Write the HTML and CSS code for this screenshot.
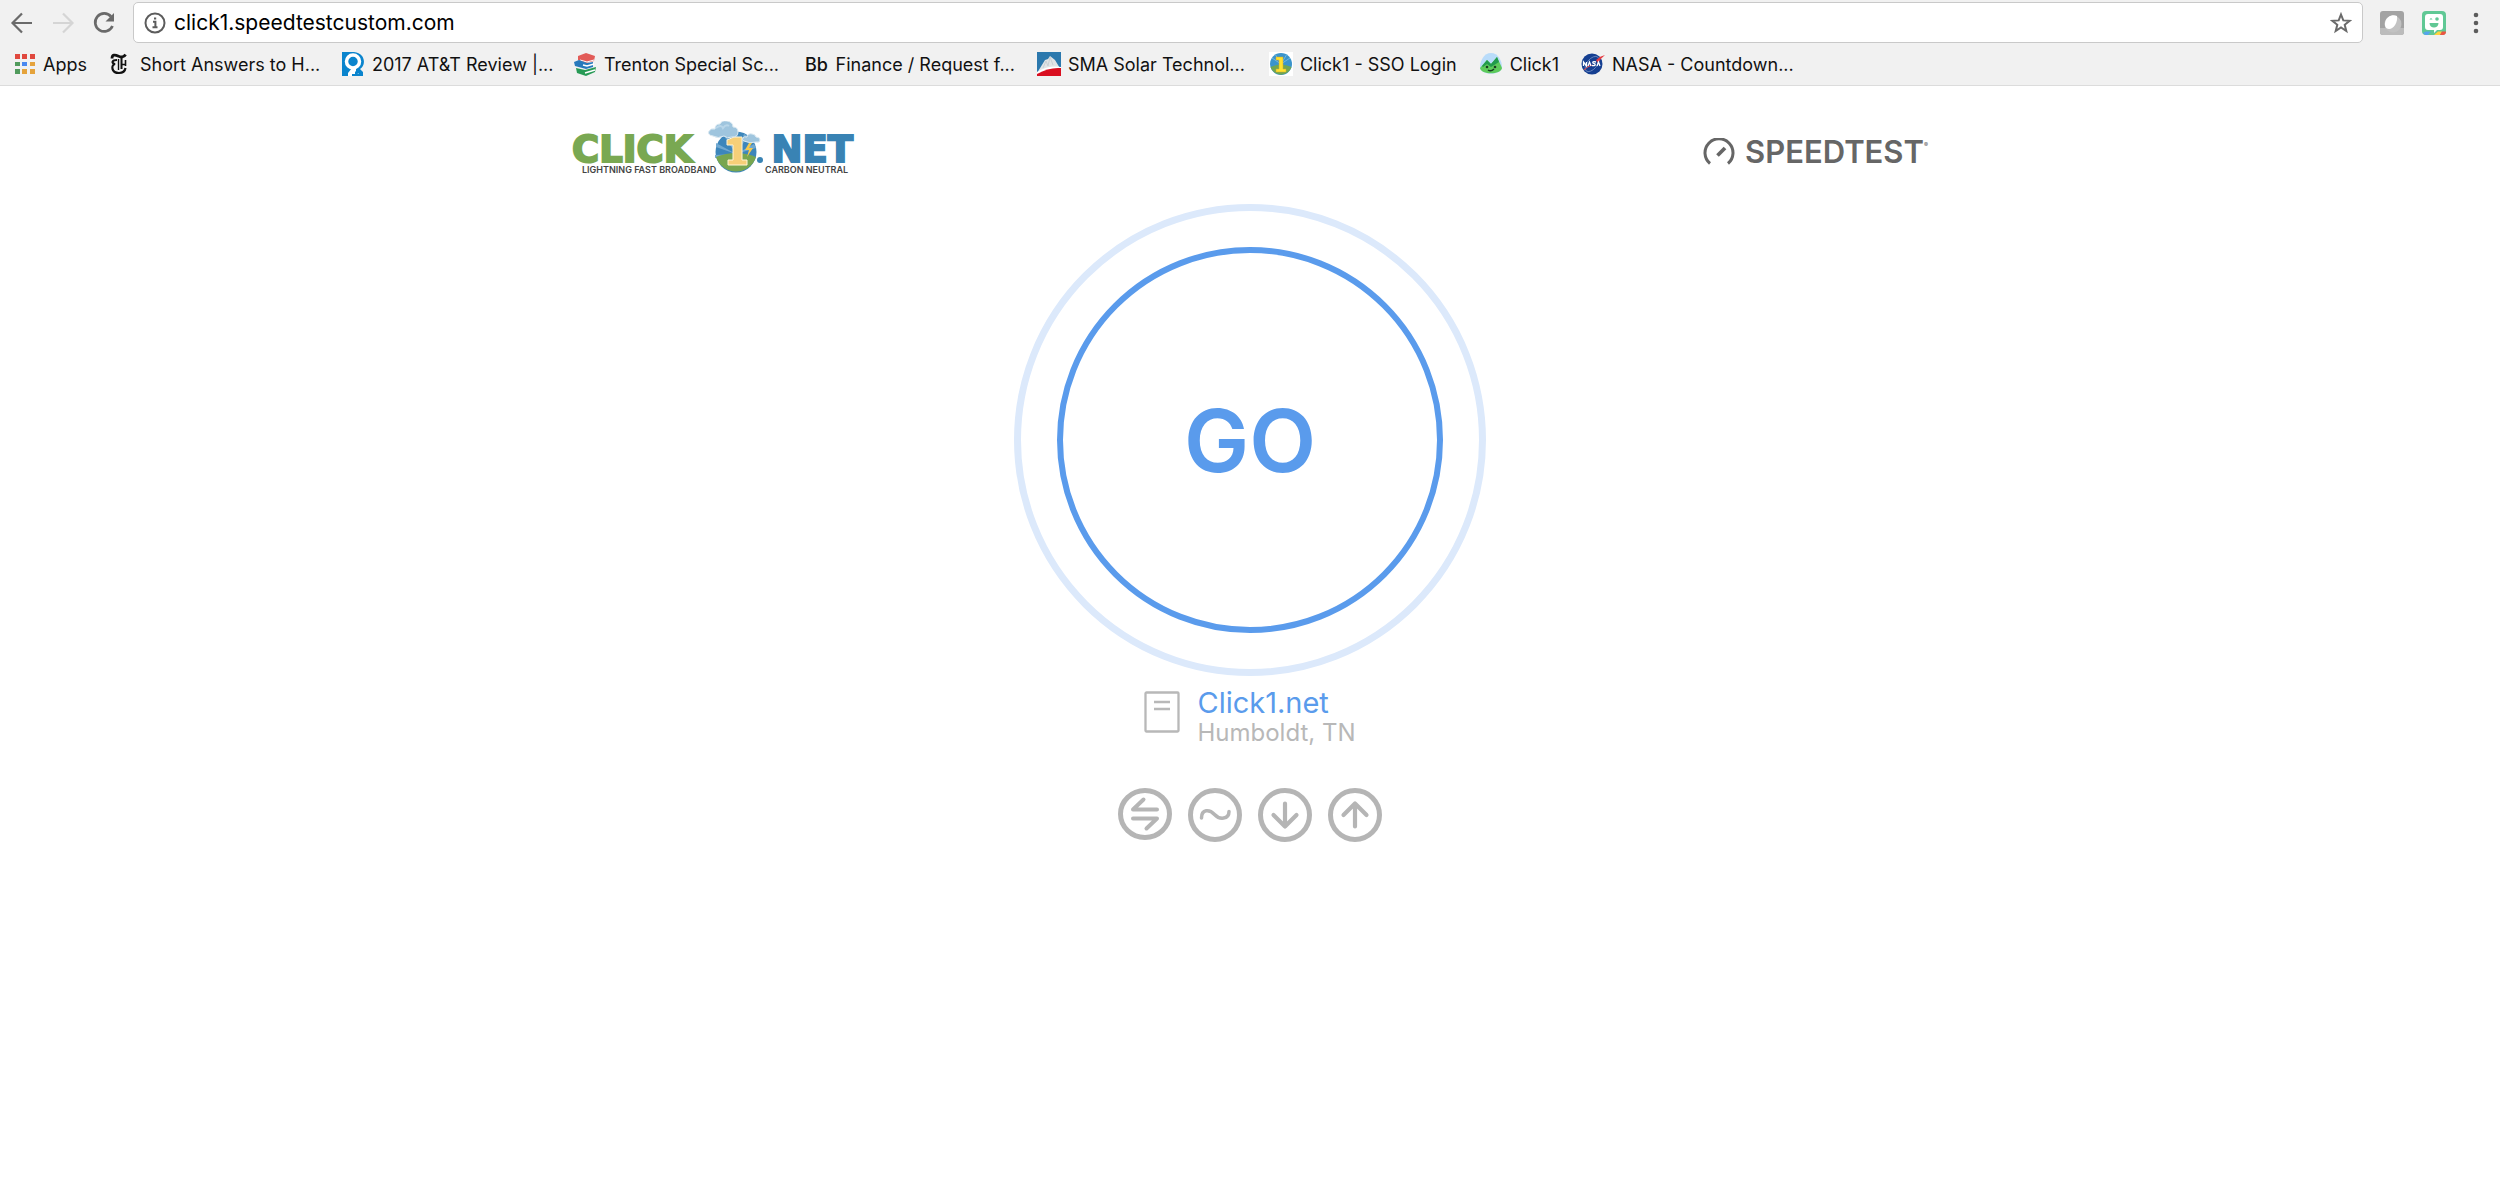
FILE: index.html
```html
<!DOCTYPE html>
<html lang="en">
<head>
<meta charset="utf-8">
<title>Click1.net Speedtest</title>
<link rel="stylesheet" href="styles.css">
</head>
<body>
<header class="browser">
  <div class="toolbar">
    <button class="tool" aria-label="Back"><svg width="24" height="24" viewBox="0 0 24 24" fill="none" stroke="#6a6a6a" stroke-width="2.2"><path d="M22 12H3M12 2.500L2.500 12l9.500 9.500"/></svg></button>
    <button class="tool" aria-label="Forward"><svg width="24" height="24" viewBox="0 0 24 24" fill="none" stroke="#d5d5d5" stroke-width="2.200"><path d="M2 12h19M12 2.500l9.500 9.500-9.500 9.500"/></svg></button>
    <button class="tool" aria-label="Reload"><svg width="24" height="24" viewBox="0 0 24 24" fill="none" stroke="#6a6a6a" stroke-width="2.700"><path d="M19 5.500A9 9 0 1 0 20.500 15"/><path d="M22 2v8.500h-8.500z" fill="#6a6a6a" stroke="none"/></svg></button>
    <div class="omnibox">
      <svg width="22" height="22" viewBox="0 0 22 22" fill="none" stroke="#5c5c5c" stroke-width="2"><circle cx="11" cy="11" r="9.500"/><path d="M9 9.800h2.400v5.200M8.500 15.300h5M10 6.600h2.200"/></svg>
      <input class="url" type="text" aria-label="Address" value="click1.speedtestcustom.com">
      <button class="star" aria-label="Bookmark this page"><svg width="22" height="22" viewBox="0 0 22 22" fill="none" stroke="#6a6a6a" stroke-width="2"><path d="M11 2.500l2.300 5.900 6.300.4-4.900 4 1.600 6.200L11 15.500 5.700 19l1.600-6.200-4.900-4 6.300-.4z"/></svg></button>
    </div>
    <div class="extensions">
      <button class="tool" aria-label="Extension"><svg width="24" height="24" viewBox="0 0 24 24"><rect width="24" height="24" rx="3" fill="#a3a3a3"/><path d="M0 17h24v4a3 3 0 0 1-3 3H3a3 3 0 0 1-3-3z" fill="#bcbcbc"/><circle cx="13" cy="13" r="8.500" fill="#c2c2c2"/><path d="M5 12C6 5 13 3 17 5c1 6-3 13-8 13-3 0-4.500-3-4-6z" fill="#fff"/></svg></button>
      <button class="tool" aria-label="Bitmoji"><svg width="24" height="24" viewBox="0 0 24 24"><rect width="24" height="24" rx="4" fill="#60c895"/><path d="M1 22l3-1.500h5L6 24H3z" fill="#55a5ec"/><path d="M12 24l4-3.500h4L18 24z" fill="#ffd23d"/><path d="M18 24l2-3.500h4c0 2-1 3.500-3 3.500z" fill="#ed5542"/><path d="M6 3h12q3 0 3 3v10q0 3-3 3h-3l-3 3v-3H6q-3 0-3-3V6q0-3 3-3z" fill="#fff"/><circle cx="15" cy="8" r="1.800" fill="#60c895"/><path d="M7.500 8.500q1.500-2.500 3 0M7.500 12h9c0 6-9 6-9 0z" fill="#60c895"/></svg></button>
      <button class="tool" aria-label="Menu"><svg width="24" height="24" viewBox="0 0 24 24" fill="#5c5c5c"><circle cx="12" cy="4" r="2.300"/><circle cx="12" cy="12" r="2.300"/><circle cx="12" cy="20" r="2.300"/></svg></button>
    </div>
  </div>
  <nav class="bookmarks" aria-label="Bookmarks">
    <a class="bookmark" href="#"><svg width="24" height="24" viewBox="0 0 24 24"><path d="M3 2h5v5H3zM10 2h5v5h-5zM18 2h5v5h-5z" fill="#e0483e"/><path d="M3 10h5v4H3zM3 17h5v5H3z" fill="#519b5d"/><path d="M10 10h5v4h-5z" fill="#4a88f0"/><path d="M18 10h5v4h-5zM10 17h5v5h-5zM18 17h5v5h-5z" fill="#e5a33c"/></svg><span>Apps</span></a>
    <a class="bookmark bookmark-cut" href="#"><svg width="24" height="24" viewBox="0 0 24 24" fill="none" stroke="#111"><path d="M3 6.500c0-4 3-4 6-2.500s6 1.500 7.500-1.500" stroke-width="2.800"/><path d="M8 8c-5 0-6 3-2 4-4 1-4 9 4 9 4 0 6-2 6.500-5" stroke-width="2.200"/><path d="M9.500 7v11" stroke-width="1.400"/><path d="M12.500 6v11" stroke-width="2"/><path d="M12.500 12.500h4M16.500 8v6" stroke-width="1.600"/></svg><span>Short Answers to H...</span></a>
    <a class="bookmark bookmark-cut" href="#"><svg width="24" height="24" viewBox="0 0 24 24"><path d="M1 0h12c12 1 12 14 6 17l3 3v4H1z" fill="#0a84cd"/><circle cx="12" cy="9.500" r="6.500" fill="#0a84cd" stroke="#fff" stroke-width="3.500"/><path d="M7 24v-3l4-5h4v5h3v3z" fill="#fff"/><path d="M11 24v-2h3v-3l2 2 4 1v2z" fill="#0a84cd"/></svg><span>2017 AT&amp;T Review |...</span></a>
    <a class="bookmark bookmark-cut" href="#"><svg width="24" height="24" viewBox="0 0 24 24"><path d="M5 4l8-3 9 3-1 5-8 2-8-3z" fill="#e25b58"/><path d="M7 8l7 2 7-2" stroke="#fff" fill="none"/><path d="M1 10l5-2 8 3 6-1v5l-7 2-11-3z" fill="#2779bc"/><path d="M10 13l4 1 7-2" stroke="#fff" fill="none" stroke-width="1.500"/><path d="M3 16l9 2 11-3-1 5-9 4-9-3z" fill="#279a55"/><path d="M12 21l10-3" stroke="#fff" fill="none" stroke-width="1.500"/></svg><span>Trenton Special Sc...</span></a>
    <a class="bookmark bookmark-cut" href="#"><span class="bb" aria-hidden="true">Bb</span><span>Finance / Request f...</span></a>
    <a class="bookmark bookmark-cut" href="#"><svg width="24" height="24" viewBox="0 0 24 24"><path d="M0 0h24v24H0z" fill="#2b78ad"/><path d="M0 21L8 8l3-1 2-3 5 4 6 10v3z" fill="#e1e4e6"/><path d="M6 16l3-7 2 5 2-9 3 8" stroke="#c9d0d4" fill="none"/><path d="M0 20Q12 13 24 15v9H0z" fill="#fff"/><path d="M0 22Q12 15 24 16v8H0z" fill="#d90f20"/></svg><span>SMA Solar Technol...</span></a>
    <a class="bookmark" href="#"><svg width="24" height="24" viewBox="0 0 24 24"><path d="M0 0h24v24H0z" fill="#fff"/><circle cx="12" cy="12" r="11" fill="#3a94cc"/><path d="M1.500 15Q12 10 22.500 15A11 11 0 0 1 1.500 15z" fill="#71a650"/><path d="M12 12L3 6M12 12L6 2M12 12L18 2M12 12l9-6" stroke="#70b7df"/><path d="M7 5h7v12h3v3H7v-3h3V8H7z" fill="#ffe22e" stroke="#c9a531" stroke-width=".5"/></svg><span>Click1 - SSO Login</span></a>
    <a class="bookmark" href="#"><svg width="24" height="24" viewBox="0 0 24 24"><path d="M12 1C5 1 1 9 1 15c0 9 22 9 22 0 0-6-4-14-11-14z" fill="#b9dcfa"/><path d="M1 16l7-8 4 4 6-7 5 11c-1 7-21 7-22 0z" fill="#5dca5b"/><path d="M3 14l5-6 4 4 6-7 2 5-8 5-4-3-4 3z" fill="#219b4d"/><circle cx="8" cy="15" r="1.300" fill="#173c20"/><circle cx="16" cy="15" r="1.300" fill="#173c20"/><path d="M9 18q3 2 6-1" fill="none" stroke="#173c20" stroke-width="1.500"/></svg><span>Click1</span></a>
    <a class="bookmark bookmark-cut" href="#"><svg width="24" height="24" viewBox="0 0 24 24"><circle cx="11" cy="12" r="10.500" fill="#153f91"/><ellipse cx="11" cy="12" rx="9" ry="5" transform="rotate(-50 11 12)" fill="none" stroke="#718dc3" stroke-width=".8"/><path d="M15 8q4-4 9-5-5 4-7 8z" fill="#e53b42"/><path d="M3 18q4-4 8-5" fill="none" stroke="#e53b42"/><path d="M2.500 14v-4l3 4v-4M7 14l1.500-4 1.500 4M15 10q-4-1-3 1l2 1q1 2-3 1.500M16 14l1.500-4 1.500 4" fill="none" stroke="#fff" stroke-width="1.300"/></svg><span>NASA - Countdown...</span></a>
  </nav>
</header>

<main class="page">
  <div class="brands">
    <a class="brand" href="#" aria-label="Click1.net">
      <svg class="isp-logo" width="284" height="56" viewBox="0 0 284 56">
        <text class="logo-word logo-click" x="0" y="41">CLICK</text>
        <text class="logo-word logo-net" x="281" y="41" text-anchor="end">NET</text>
        <circle cx="188" cy="39" r="3" fill="#3983b4"/>
        <circle cx="164" cy="31" r="22" fill="#fff"/>
        <g transform="translate(1 -1)">
          <circle cx="163" cy="32" r="20.500" fill="#3d86bb"/>
          <path d="M163 34L143 27v-4zM163 34L151 16l3-3zM163 34l-2-22h4zM163 34l8-20 4 2zM163 34l18-10 2 4zM163 34l-21 1v3z" fill="#71a9d1"/>
          <path d="M143 37q20-8 40 0a21 21 0 0 1-40 0z" fill="#78a64f"/>
          <path d="M154 20l7-3h8v23h5v5h-19v-5h5V25h-6z" fill="#f6cf78" stroke="#fff5d6"/>
          <path d="M140 16q-6-1-4-5 2-3 6-2 0-5 5-5 2-4 7-3 6 1 6 6 5 0 5 5t-6 5q-5 2-8-1-6 3-11 0z" fill="#9fc5de" stroke="#dceaf2"/>
          <path d="M143 8q5-4 7 0 3-4 6-2" fill="none" stroke="#b9d6e9" stroke-width="2"/>
          <path d="M171 21q-3-1-1-3 1-2 4-1 1-4 5-3 3 0 4 3 4 0 4 3t-4 2q-6 2-12-1z" fill="#9fc5de" stroke="#dceaf2"/>
          <path d="M176 23l-4 7h4l-2 7 6-9h-4l3-5z" fill="#f5c94c"/>
        </g>
        <text class="logo-tag" x="10" y="52">LIGHTNING FAST BROADBAND</text>
        <text class="logo-tag" x="193" y="52">CARBON NEUTRAL</text>
      </svg>
    </a>
    <a class="brand speedtest" href="#">
      <svg width="32" height="28" viewBox="0 0 32 28" fill="none" stroke="#666" stroke-width="3"><path d="M7 25.500A14 14 0 1 1 25 25.500"/><path d="M14.500 17.500L22 10" stroke-width="3.800"/></svg>
      <span>SPEEDTEST</span><sup>®</sup>
    </a>
  </div>

  <div class="go-ring"><button class="go">GO</button></div>

  <section class="server">
    <svg width="36" height="42" viewBox="0 0 36 42" fill="none" stroke="#b8b8b8" stroke-width="2.300"><rect x="1.500" y="1.500" width="33" height="39" rx="1"/><path d="M10 11h16M10 18h16"/></svg>
    <div>
      <a class="server-name" href="#">Click1.net</a>
      <div class="server-place">Humboldt, TN</div>
    </div>
  </section>

  <div class="stages">
    <svg width="54" height="54" viewBox="0 0 54 54"><ellipse cx="27" cy="26" rx="24.500" ry="23.500"/><path stroke-width="4" d="M39 21.500H15L25.500 11.500M15 30.500h24L28.500 40.500"/></svg>
    <svg width="54" height="54" viewBox="0 0 54 54"><circle cx="27" cy="27" r="24.500"/><path stroke-width="3.500" d="M13.500 30c0-9 8-9 13-3.500s14.500 5 14.500-3"/></svg>
    <svg width="54" height="54" viewBox="0 0 54 54"><circle cx="27" cy="27" r="24.500"/><path stroke-width="4.200" d="M27 15.500v23M15.500 27L27 38.500 38.500 27"/></svg>
    <svg width="54" height="54" viewBox="0 0 54 54"><circle cx="27" cy="27" r="24.500"/><path stroke-width="4.200" d="M27 38.500v-23M15.500 27L27 15.500 38.500 27"/></svg>
  </div>
</main>
</body>
</html>
```
FILE: styles.css
```css
* { box-sizing: border-box; }

body {
  margin: 0;
  background: #fff;
  color: #111;
  font-family: Inter, "Liberation Sans", sans-serif;
}

svg { display: block; flex: none; }
a { color: inherit; text-decoration: none; }

button {
  margin: 0;
  padding: 0;
  border: 0;
  background: none;
  font: inherit;
}

/* Browser chrome */
.browser {
  height: 86px;
  padding-top: 2px;
  background: #f1f1f1;
  border-bottom: 1px solid #dcdcdc;
}

.toolbar {
  display: flex;
  align-items: center;
  gap: 17px;
  padding: 0 12px 0 10px;
}

.omnibox {
  flex: 1;
  display: flex;
  align-items: center;
  gap: 8px;
  height: 41px;
  padding: 0 10px;
  background: #fff;
  border: 1px solid #c9c9c9;
  border-radius: 5px;
}

.url {
  flex: 1;
  min-width: 0;
  padding: 0;
  border: 0;
  outline: 0;
  background: none;
  color: #000;
  font: 21px Inter, "Liberation Sans", sans-serif;
}

.extensions { display: flex; gap: 18px; }

.bookmarks {
  display: flex;
  align-items: center;
  gap: 22px;
  height: 42px;
  padding-left: 12px;
  font-size: 18px;
  white-space: nowrap;
}

.bookmark { display: flex; align-items: center; gap: 7px; }
.bookmark-cut { width: 210px; }
.bb { width: 24px; font-weight: 500; }

/* Page */
.page {
  display: flex;
  flex-direction: column;
  align-items: center;
}

.brands {
  display: flex;
  justify-content: space-between;
  align-items: center;
  width: 100%;
  max-width: 1356px;
  height: 118px;
  padding-top: 8px;
}

.logo-word {
  font-family: "DejaVu Sans", sans-serif;
  font-size: 37px;
  font-weight: 700;
  stroke-width: 2;
}

.logo-click { fill: #79a852; stroke: #79a852; }
.logo-net { fill: #3983b4; stroke: #3983b4; }
.logo-tag { font-size: 9px; font-weight: 600; fill: #444; }

.speedtest {
  display: flex;
  align-items: center;
  gap: 10px;
  padding-top: 5px;
  color: #666;
  font-size: 31px;
  font-weight: 600;
}

.speedtest sup {
  align-self: flex-start;
  margin-left: -10px;
  font-size: 6px;
  line-height: 24px;
}

.go-ring {
  display: flex;
  padding: 36px;
  border: 7px solid #dce9fb;
  border-radius: 50%;
}

.go {
  width: 386px;
  height: 386px;
  border: 6px solid #5a9bec;
  border-radius: 50%;
  color: #5a9bec;
  font-size: 87px;
  font-weight: 600;
}

.server {
  display: flex;
  gap: 17px;
  align-items: flex-start;
  padding-top: 10px;
}

.server svg { margin-top: 5px; }

.server-name {
  display: block;
  color: #5a9bec;
  font-size: 29px;
  line-height: 34px;
}

.server-place {
  color: #b8b8b8;
  font-size: 24px;
  line-height: 26px;
}

.stages { display: flex; gap: 16px; padding-top: 42px; }

.stages svg {
  fill: none;
  stroke: #b5b5b5;
  stroke-width: 5;
  stroke-linecap: round;
  stroke-linejoin: round;
}
```
